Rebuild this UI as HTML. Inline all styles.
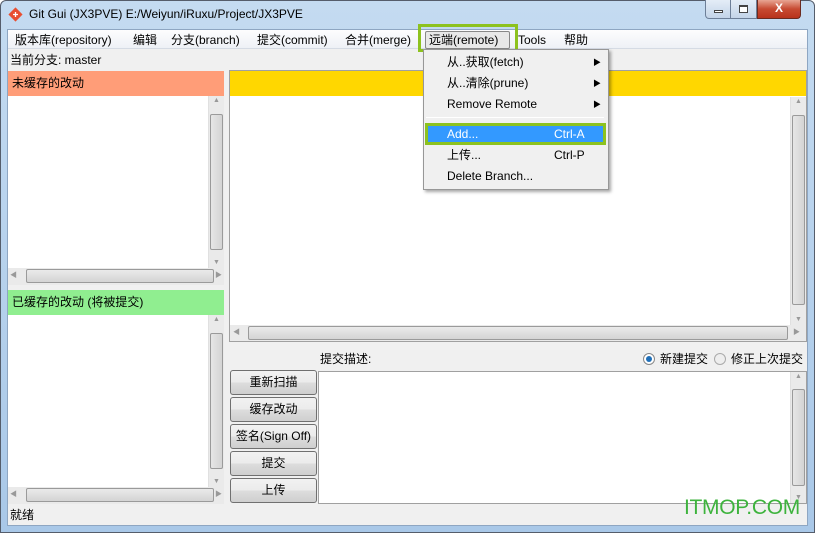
<!DOCTYPE html>
<html><head><meta charset="utf-8"><style>
*{box-sizing:border-box;margin:0;padding:0}
body{width:815px;height:533px;overflow:hidden;background:#fff;font-family:"Liberation Sans","Noto Sans CJK SC",sans-serif;font-size:12px;color:#000;position:relative}
.a{position:absolute;line-height:15px}
.frame{left:0;top:0;width:815px;height:533px;background:linear-gradient(#c4dbf1,#a9c8e8);border:1px solid #555d6b;border-radius:6px 6px 0 0}
.client{left:7px;top:29px;width:801px;height:497px;background:#f0f0f0;border:1px solid #8ea6c2}
.vs{background:#eaeaea;border-left:1px solid #e0e0e0}
.thumbv{background:linear-gradient(90deg,#e6e6e6,#d4d4d4);border:1px solid #9a9a9a;border-radius:2px}
.thumbh{background:linear-gradient(#eaeaea,#d4d4d4);border:1px solid #9a9a9a;border-radius:2px}
.arr{color:#999;font-size:7px;text-align:center;line-height:10px}
.btn{left:230px;width:87px;height:25px;border:1px solid #707070;border-radius:3px;background:linear-gradient(#f2f2f2 0,#ebebeb 50%,#dddddd 51%,#cfcfcf);text-align:center;line-height:23px;font-size:12px}
.mi{position:absolute;left:24px;font-size:12px;line-height:15px}
</style></head><body>
<div class="a frame"></div>
<svg class="a" style="left:8px;top:7px" width="15" height="15" viewBox="0 0 15 15"><rect x="2.5" y="2.5" width="10" height="10" transform="rotate(45 7.5 7.5)" fill="#e84e31"/><path d="M5 7.5h5M7.5 5v5" stroke="#fff" stroke-width="1.3"/></svg>
<div class="a" style="left:29px;top:7px;font-size:12px">Git Gui (JX3PVE) E:/Weiyun/iRuxu/Project/JX3PVE</div>
<div class="a" style="left:705px;top:0;width:26px;height:19px;border:1px solid #6d7f98;border-top:none;border-radius:0 0 0 4px;background:linear-gradient(#e4edf7,#c3d4e8)"><div class="a" style="left:8px;top:10px;width:9px;height:3px;background:#fff;border:1px solid #444"></div></div>
<div class="a" style="left:731px;top:0;width:26px;height:19px;border:1px solid #6d7f98;border-top:none;border-left:none;background:linear-gradient(#e4edf7,#c3d4e8)"><div class="a" style="left:8px;top:5px;width:9px;height:8px;border:1px solid #444;border-top-width:2px;background:#fff"></div></div>
<div class="a" style="left:757px;top:0;width:44px;height:19px;border:1px solid #6b2a20;border-top:none;border-radius:0 0 4px 0;background:linear-gradient(#e8a593,#c74a32 50%,#b8321c);color:#fff;font-weight:bold;text-align:center;font-size:12px;line-height:17px">X</div>
<div class="a client"></div>
<div class="a" style="left:8px;top:30px;width:799px;height:19px;background:linear-gradient(#fdfdfe,#eef1f6);border-bottom:1px solid #d5dbe4"></div>
<div class="a" style="left:15px;top:33px">版本库(repository)</div>
<div class="a" style="left:133px;top:33px">编辑</div>
<div class="a" style="left:171px;top:33px">分支(branch)</div>
<div class="a" style="left:257px;top:33px">提交(commit)</div>
<div class="a" style="left:345px;top:33px">合并(merge)</div>
<div class="a" style="left:425px;top:31px;width:85px;height:18px;border:1px solid #888;border-radius:2px;background:#e8e8e8"></div>
<div class="a" style="left:429px;top:33px">远端(remote)</div>
<div class="a" style="left:418px;top:24px;width:100px;height:28px;border:3px solid #8dc21f"></div>
<div class="a" style="left:518px;top:33px">Tools</div>
<div class="a" style="left:564px;top:33px">帮助</div>
<div class="a" style="left:10px;top:53px">当前分支: master</div>
<div class="a" style="left:8px;top:71px;width:216px;height:25px;background:#ff9d78"></div>
<div class="a" style="left:12px;top:76px">未缓存的改动</div>
<div class="a" style="left:8px;top:96px;width:200px;height:172px;background:#fff"></div>
<div class="a vs" style="left:208px;top:96px;width:16px;height:172px"><div class="arr">▲</div><div class="a thumbv" style="left:1px;top:18px;width:13px;height:136px"></div><div class="arr a" style="left:0;bottom:0;width:15px">▼</div></div>
<div class="a" style="left:8px;top:268px;width:216px;height:17px;background:#eaeaea"><div class="a arr" style="left:2px;top:3px">◀</div><div class="a thumbh" style="left:18px;top:1px;width:188px;height:14px"></div><div class="a arr" style="left:207px;top:3px">▶</div></div>
<div class="a" style="left:8px;top:290px;width:216px;height:25px;background:#90ee90"></div>
<div class="a" style="left:12px;top:295px">已缓存的改动 (将被提交)</div>
<div class="a" style="left:8px;top:315px;width:200px;height:172px;background:#fff"></div>
<div class="a vs" style="left:208px;top:315px;width:16px;height:172px"><div class="arr">▲</div><div class="a thumbv" style="left:1px;top:18px;width:13px;height:136px"></div><div class="arr a" style="left:0;bottom:0;width:15px">▼</div></div>
<div class="a" style="left:8px;top:487px;width:216px;height:17px;background:#eaeaea"><div class="a arr" style="left:2px;top:3px">◀</div><div class="a thumbh" style="left:18px;top:1px;width:188px;height:14px"></div><div class="a arr" style="left:207px;top:3px">▶</div></div>
<div class="a" style="left:229px;top:70px;width:578px;height:272px;border:1px solid #a0a0a0;background:#fff"></div>
<div class="a" style="left:230px;top:71px;width:576px;height:25px;background:#ffd700"></div>
<div class="a vs" style="left:790px;top:97px;width:16px;height:228px"><div class="arr">▲</div><div class="a thumbv" style="left:1px;top:18px;width:13px;height:190px"></div><div class="arr a" style="left:0;bottom:0;width:15px">▼</div></div>
<div class="a" style="left:230px;top:325px;width:576px;height:16px;background:#eaeaea"><div class="a arr" style="left:3px;top:3px">◀</div><div class="a thumbh" style="left:18px;top:1px;width:540px;height:14px"></div><div class="a arr" style="left:563px;top:3px">▶</div></div>
<div class="a" style="left:320px;top:352px">提交描述:</div>
<div class="a" style="left:643px;top:353px;width:12px;height:12px;border-radius:50%;border:1px solid #888;background:#fff"><div class="a" style="left:2px;top:2px;width:6px;height:6px;border-radius:50%;background:#1f6fb8"></div></div>
<div class="a" style="left:660px;top:352px">新建提交</div>
<div class="a" style="left:714px;top:353px;width:12px;height:12px;border-radius:50%;border:1px solid #aaa;background:#eee"></div>
<div class="a" style="left:731px;top:352px">修正上次提交</div>
<div class="a btn" style="top:370px;line-height:23px">重新扫描</div>
<div class="a btn" style="top:397px;line-height:23px">缓存改动</div>
<div class="a btn" style="top:424px;line-height:23px">签名(Sign Off)</div>
<div class="a btn" style="top:451px;line-height:23px">提交</div>
<div class="a btn" style="top:478px;line-height:23px">上传</div>
<div class="a" style="left:318px;top:371px;width:489px;height:133px;border:1px solid #a0a0a0;background:#fff"></div>
<div class="a vs" style="left:790px;top:372px;width:16px;height:131px"><div class="arr">▲</div><div class="a thumbv" style="left:1px;top:17px;width:13px;height:97px"></div><div class="arr a" style="left:0;bottom:0;width:15px">▼</div></div>
<div class="a" style="left:10px;top:508px">就绪</div>
<div class="a" style="left:684px;top:496px;font-size:21px;line-height:24px;color:#3db33d;letter-spacing:-0.3px">ITMOP.COM</div>
<div class="a" style="left:423px;top:49px;width:186px;height:141px;background:#f0f0f0;border:1px solid #979797;box-shadow:2px 2px 3px rgba(0,0,0,.35)"></div>
<div class="a" style="left:423px;top:49px;width:186px;height:141px">
<div class="mi" style="top:6px">从..获取(fetch)</div><div class="a" style="left:170px;top:6px;font-size:8px">▶</div>
<div class="mi" style="top:27px">从..清除(prune)</div><div class="a" style="left:170px;top:27px;font-size:8px">▶</div>
<div class="mi" style="top:48px">Remove Remote</div><div class="a" style="left:170px;top:48px;font-size:8px">▶</div>
<div class="a" style="left:3px;top:68px;width:178px;height:1px;background:#a0a0a0;border-bottom:1px solid #fff"></div>
<div class="a" style="left:2px;top:74px;width:181px;height:22px;background:#3399ff;border:3px solid #8dc21f"></div>
<div class="mi" style="top:78px;color:#fff">Add...</div><div class="a" style="left:131px;top:78px;color:#fff">Ctrl-A</div>
<div class="mi" style="top:99px">上传...</div><div class="a" style="left:131px;top:99px">Ctrl-P</div>
<div class="mi" style="top:120px">Delete Branch...</div>
</div>
</body></html>
